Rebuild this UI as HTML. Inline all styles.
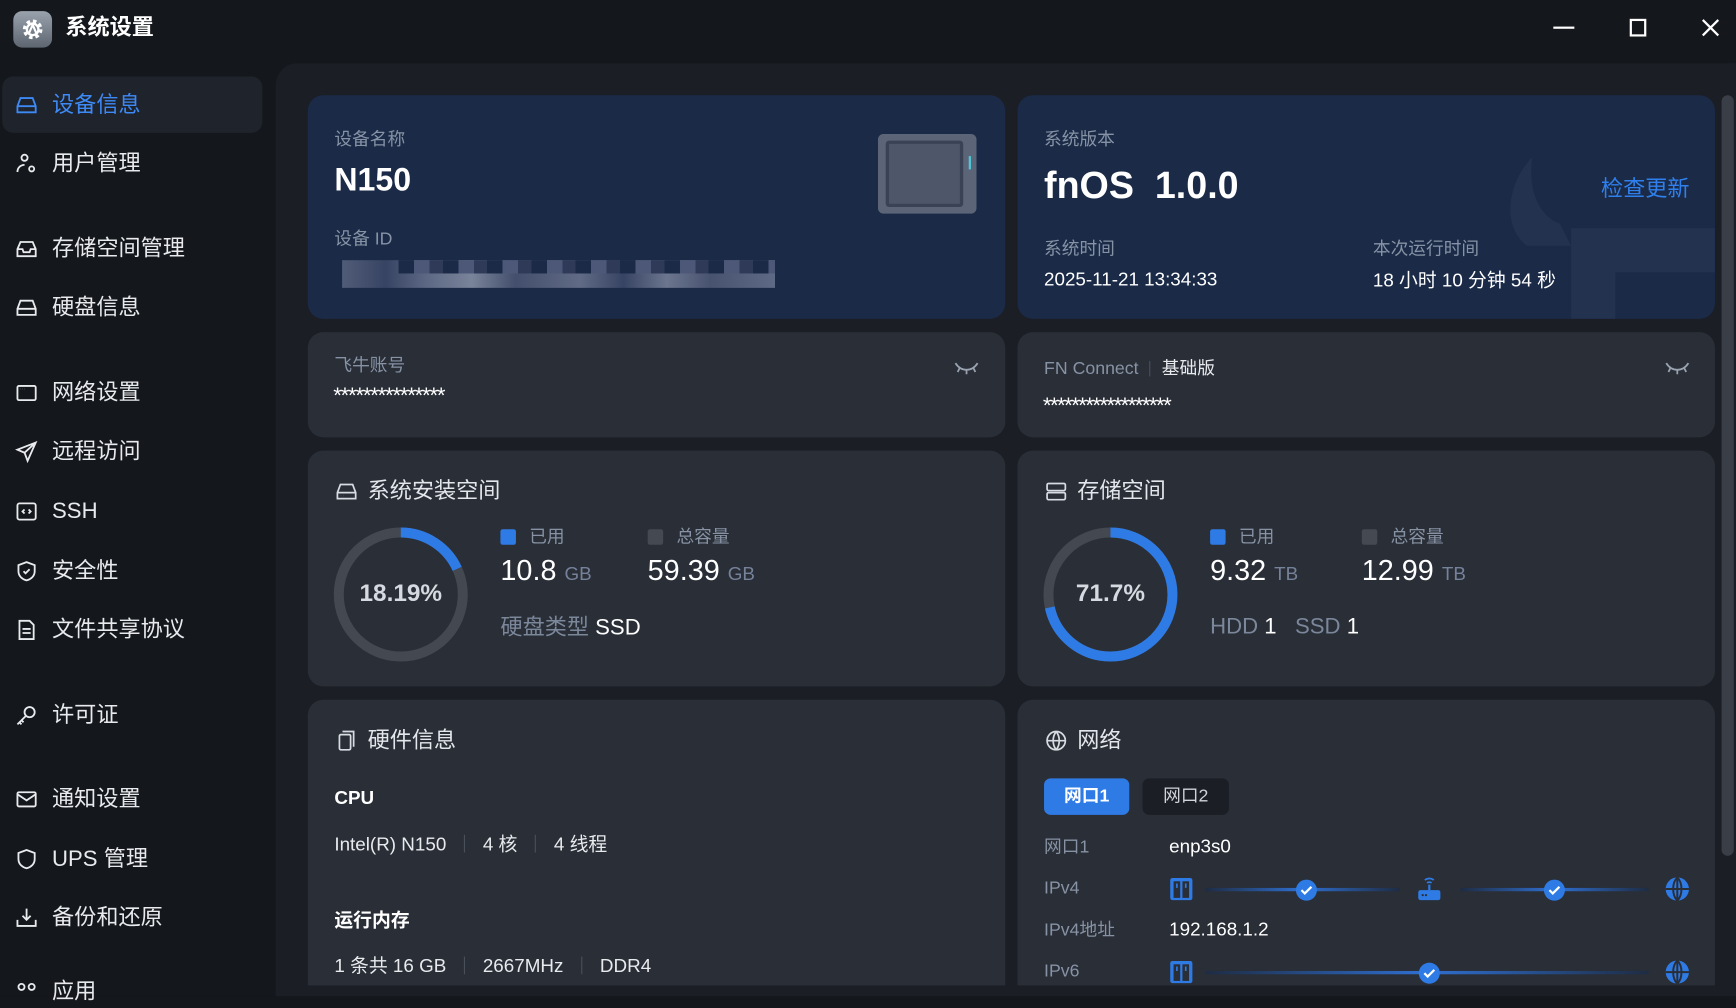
<!DOCTYPE html>
<html><head><meta charset="utf-8"><style>
*{margin:0;padding:0;box-sizing:border-box}
html,body{width:1736px;height:996px;overflow:hidden;background:#14171b}
#w{position:absolute;left:0;top:0;width:1568px;height:900px;transform:scale(1.10714);transform-origin:0 0;background:#14171b;font-family:"Liberation Sans","Noto Sans CJK SC",sans-serif;color:#e8eaed;line-height:1.32}
.a{position:absolute;white-space:nowrap}
.main{position:absolute;left:249px;top:57px;width:1319px;height:843px;background:#1b1e25;border-top-left-radius:20px}
.card{position:absolute;border-radius:14px;background:#292e37;overflow:hidden}
.blue{background:#1a2a47}
.nav{position:absolute;left:13px;font-size:20px;color:#e8eaed;display:flex;align-items:center;gap:12px;height:28px}
.nav svg{width:22px;height:22px}
.lbl{font-size:16px;color:#8793a5}
.sep{display:inline-block;width:1px;height:16px;background:#4a505a;margin:0 16px;vertical-align:-2px}
.ttl{font-size:20px;color:#e3e6ea;display:flex;align-items:center;gap:8px}
</style></head><body><div id="w">
<div class="a" style="left:12px;top:10px;width:35px;height:33px;border-radius:8px;background:linear-gradient(#9aa3ad,#5d6670)"></div>
<svg class="a" style="left:17px;top:14px" width="25" height="25" viewBox="0 0 24 24"><circle cx="12" cy="12" r="7" fill="none" stroke="#fff" stroke-width="3" stroke-dasharray="3 2.5"/><circle cx="12" cy="12" r="5" fill="none" stroke="#fff" stroke-width="2"/><path d="M9 15l3-7 3 7" stroke="#fff" stroke-width="1.8" fill="none"/></svg>
<div class="a" style="left:59px;top:12px;font-size:20px;font-weight:bold;color:#fff">系统设置</div>
<div class="a" style="left:1403px;top:24px;width:19px;height:2px;background:#fff"></div>
<div class="a" style="left:1472px;top:17px;width:15px;height:16px;border:2px solid #fff"></div>
<svg class="a" style="left:1537px;top:17px" width="16" height="16" viewBox="0 0 16 16"><path d="M1 1L15 15M15 1L1 15" stroke="#fff" stroke-width="2"/></svg>

<div class="a" style="left:2px;top:69px;width:235px;height:51px;border-radius:10px;background:#1f232b"></div>
<div class="nav" style="top:81px;color:#3d8af7"><svg viewBox="0 0 24 24" fill="none" stroke="#3d8af7" stroke-width="1.8"><path d="M3 13l3-8h12l3 8v6H3z M3 13h18"/><path d="M6.5 16h.1M9 16h.1"/></svg>设备信息</div>
<div class="nav" style="top:134px"><svg viewBox="0 0 24 24" fill="none" stroke="#e8eaed" stroke-width="1.8"><circle cx="10" cy="6" r="3"/><path d="M3 20c0-4 3-7 7-7"/><circle cx="17" cy="17" r="2.5"/></svg>用户管理</div>
<div class="nav" style="top:211px"><svg viewBox="0 0 24 24" fill="none" stroke="#e8eaed" stroke-width="1.8"><path d="M3 12l3-7h12l3 7v7H3z M3 12h5l1 3h6l1-3h5"/></svg>存储空间管理</div>
<div class="nav" style="top:264px"><svg viewBox="0 0 24 24" fill="none" stroke="#e8eaed" stroke-width="1.8"><path d="M3 13l3-8h12l3 8v6H3z M3 13h18"/></svg>硬盘信息</div>
<div class="nav" style="top:341px"><svg viewBox="0 0 24 24" fill="none" stroke="#e8eaed" stroke-width="1.8"><rect x="3" y="5" width="18" height="14" rx="1.5"/><path d="M6 8h.1M8 8h.1M10 8h.1"/></svg>网络设置</div>
<div class="nav" style="top:394px"><svg viewBox="0 0 24 24" fill="none" stroke="#e8eaed" stroke-width="1.8"><path d="M21 3L3 10l7 3 3 8z M10 13l11-10"/></svg>远程访问</div>
<div class="nav" style="top:448px"><svg viewBox="0 0 24 24" fill="none" stroke="#e8eaed" stroke-width="1.8"><rect x="3" y="4" width="18" height="16" rx="2"/><path d="M10 10l-2 2 2 2M14 10l2 2-2 2"/></svg>SSH</div>
<div class="nav" style="top:502px"><svg viewBox="0 0 24 24" fill="none" stroke="#e8eaed" stroke-width="1.8"><path d="M12 3l8 3v6c0 5-4 8-8 9-4-1-8-4-8-9V6z"/><path d="M9 12l2 2 4-4"/></svg>安全性</div>
<div class="nav" style="top:555px"><svg viewBox="0 0 24 24" fill="none" stroke="#e8eaed" stroke-width="1.8"><path d="M5 3h10l4 4v14H5z M8 11h8M8 15h8"/></svg>文件共享协议</div>
<div class="nav" style="top:632px"><svg viewBox="0 0 24 24" fill="none" stroke="#e8eaed" stroke-width="1.8"><circle cx="15" cy="9" r="5"/><path d="M11 13l-8 8M5 19l2 2M7 17l2 2"/></svg>许可证</div>
<div class="nav" style="top:708px"><svg viewBox="0 0 24 24" fill="none" stroke="#e8eaed" stroke-width="1.8"><rect x="3" y="5" width="18" height="14" rx="1.5"/><path d="M3 7l9 6 9-6"/></svg>通知设置</div>
<div class="nav" style="top:762px"><svg viewBox="0 0 24 24" fill="none" stroke="#e8eaed" stroke-width="1.8"><path d="M12 3l8 3v6c0 5-4 8-8 9-4-1-8-4-8-9V6z"/></svg>UPS 管理</div>
<div class="nav" style="top:815px"><svg viewBox="0 0 24 24" fill="none" stroke="#e8eaed" stroke-width="1.8"><path d="M12 3v11M8 10l4 4 4-4M3 14v6h18v-6"/></svg>备份和还原</div>
<div class="nav" style="top:882px"><svg viewBox="0 0 24 24" fill="none" stroke="#e8eaed" stroke-width="1.8"><circle cx="7" cy="7" r="3"/><circle cx="17" cy="7" r="3"/></svg>应用</div>

<div class="main"></div>
<div class="a" style="left:1555px;top:86px;width:11px;height:687px;border-radius:6px;background:#3a3f47"></div>

<div class="card blue" style="left:278px;top:86px;width:630px;height:202px">
 <div class="a lbl" style="left:24px;top:30px">设备名称</div>
 <div class="a" style="left:24px;top:58px;font-size:29px;font-weight:bold;color:#fff">N150</div>
 <div class="a lbl" style="left:24px;top:120px">设备 ID</div>
 <div class="a" style="left:31px;top:149px;width:391px;height:25px;background:linear-gradient(90deg,#5a6580,#3c4868 10%,#6a7590 20%,#8a93a8 30%,#4a5573 40%,#6d7690 55%,#3c4868 65%,#7a839a 75%,#505a77 85%,#6a7590);opacity:.85"></div>
 <div class="a" style="left:82px;top:149px;width:340px;height:12px;background:repeating-linear-gradient(90deg,#1a2a47 0 14px,#4d5878 14px 28px,#2e3a58 28px 40px)"></div>
 <div class="a" style="left:515px;top:35px;width:89px;height:72px;border-radius:5px;background:#5b6577"></div>
 <div class="a" style="left:522px;top:41px;width:70px;height:60px;border:3px solid #3a4255;background:#4e5769;border-radius:3px"></div>
 <div class="a" style="left:597px;top:55px;width:2px;height:12px;background:#4ec8d8"></div>
</div>
<div class="card blue" style="left:919px;top:86px;width:630px;height:202px">
 <svg class="a" style="left:440px;top:50px" width="190" height="152" viewBox="0 0 190 152" fill="#22324f"><path d="M25 6c-20 20-30 60-5 80l40 0-10-20c-15-5-30-25-25-60z"/><path d="M60 70h130v40H100v42H60z"/></svg>
 <div class="a lbl" style="left:24px;top:30px">系统版本</div>
 <div class="a" style="left:24px;top:60px;font-size:34px;font-weight:bold;color:#fff">fnOS&nbsp; 1.0.0</div>
 <div class="a" style="left:527px;top:72px;font-size:20px;color:#2f80ed">检查更新</div>
 <div class="a lbl" style="left:24px;top:129px">系统时间</div>
 <div class="a" style="left:24px;top:156px;font-size:17px;color:#fff">2025-11-21 13:34:33</div>
 <div class="a lbl" style="left:321px;top:129px">本次运行时间</div>
 <div class="a" style="left:321px;top:157px;font-size:17px;color:#fff">18 小时 10 分钟 54 秒</div>
</div>
<div class="card" style="left:278px;top:300px;width:630px;height:95px">
 <div class="a lbl" style="left:24px;top:20px">飞牛账号</div>
 <div class="a" style="left:23px;top:45px;font-size:20px;color:#fff;letter-spacing:-1.1px">***************</div>
 <svg class="a" style="left:584px;top:26px" width="22" height="14" viewBox="0 0 22 14" fill="none" stroke="#9aa3b0" stroke-width="1.6"><path d="M1 2c5 8 15 8 20 0M5 6l-2 4M11 8v4M17 6l2 4"/></svg>
</div>
<div class="card" style="left:919px;top:300px;width:630px;height:95px">
 <div class="a lbl" style="left:24px;top:23px">FN Connect<span class="sep" style="margin:0 10px;height:14px"></span><span style="color:#e8eaed">基础版</span></div>
 <div class="a" style="left:23px;top:54px;font-size:20px;color:#fff;letter-spacing:-1.4px">******************</div>
 <svg class="a" style="left:585px;top:26px" width="22" height="14" viewBox="0 0 22 14" fill="none" stroke="#9aa3b0" stroke-width="1.6"><path d="M1 2c5 8 15 8 20 0M5 6l-2 4M11 8v4M17 6l2 4"/></svg>
</div>
<div class="card" style="left:278px;top:407px;width:630px;height:213px">
 <div class="a ttl" style="left:24px;top:24px"><svg width="22" height="22" viewBox="0 0 24 24" fill="none" stroke="#d8dce2" stroke-width="1.7"><path d="M3 13l3-8h12l3 8v6H3z M3 13h18M6.5 16h.1M9 16h.1"/></svg>系统安装空间</div>
 <svg class="a" style="left:23px;top:69px" width="122" height="122" viewBox="0 0 122 122"><circle cx="61" cy="61" r="56" fill="none" stroke="#434851" stroke-width="9"/><circle cx="61" cy="61" r="56" fill="none" stroke="#2f7be5" stroke-width="9" stroke-dasharray="64 400" transform="rotate(-90 61 61)"/></svg>
 <div class="a" style="left:23px;top:114px;width:122px;text-align:center;font-size:22px;font-weight:bold;color:#d6dae0">18.19%</div>
 <div class="a" style="left:174px;top:71px;width:14px;height:14px;border-radius:2px;background:#2f7be5"></div>
 <div class="a lbl" style="left:200px;top:68px">已用</div>
 <div class="a" style="left:307px;top:71px;width:14px;height:14px;border-radius:2px;background:#444952"></div>
 <div class="a lbl" style="left:333px;top:68px">总容量</div>
 <div class="a" style="left:174px;top:91px;font-size:26px;color:#fff">10.8 <span style="font-size:17px;color:#76829a">GB</span></div>
 <div class="a" style="left:307px;top:91px;font-size:26px;color:#fff">59.39 <span style="font-size:17px;color:#76829a">GB</span></div>
 <div class="a" style="left:174px;top:147px;font-size:20px;color:#7b879a">硬盘类型 <span style="color:#fff">SSD</span></div>
</div>
<div class="card" style="left:919px;top:407px;width:630px;height:213px">
 <div class="a ttl" style="left:24px;top:24px"><svg width="22" height="22" viewBox="0 0 24 24" fill="none" stroke="#d8dce2" stroke-width="1.7"><rect x="3" y="4" width="18" height="7" rx="1.5"/><rect x="3" y="13" width="18" height="7" rx="1.5"/></svg>存储空间</div>
 <svg class="a" style="left:23px;top:69px" width="122" height="122" viewBox="0 0 122 122"><circle cx="61" cy="61" r="56" fill="none" stroke="#434851" stroke-width="9"/><circle cx="61" cy="61" r="56" fill="none" stroke="#2f7be5" stroke-width="9" stroke-dasharray="252 400" transform="rotate(-90 61 61)"/></svg>
 <div class="a" style="left:23px;top:114px;width:122px;text-align:center;font-size:22px;font-weight:bold;color:#d6dae0">71.7%</div>
 <div class="a" style="left:174px;top:71px;width:14px;height:14px;border-radius:2px;background:#2f7be5"></div>
 <div class="a lbl" style="left:200px;top:68px">已用</div>
 <div class="a" style="left:311px;top:71px;width:14px;height:14px;border-radius:2px;background:#444952"></div>
 <div class="a lbl" style="left:337px;top:68px">总容量</div>
 <div class="a" style="left:174px;top:91px;font-size:26px;color:#fff">9.32 <span style="font-size:17px;color:#76829a">TB</span></div>
 <div class="a" style="left:311px;top:91px;font-size:26px;color:#fff">12.99 <span style="font-size:17px;color:#76829a">TB</span></div>
 <div class="a" style="left:174px;top:146px;font-size:20px;color:#7b879a">HDD <span style="color:#fff">1</span>&nbsp;&nbsp; SSD <span style="color:#fff">1</span></div>
</div>
<div class="card" style="left:278px;top:632px;width:630px;height:258px;border-bottom-left-radius:0;border-bottom-right-radius:0">
 <div class="a ttl" style="left:24px;top:24px"><svg width="22" height="22" viewBox="0 0 24 24" fill="none" stroke="#d8dce2" stroke-width="1.7"><rect x="5" y="6" width="11" height="15" rx="1.5"/><path d="M8 3h11v15"/></svg>硬件信息</div>
 <div class="a" style="left:24px;top:78px;font-size:17px;font-weight:bold;color:#fff">CPU</div>
 <div class="a" style="left:24px;top:120px;font-size:17px;color:#e8eaed">Intel(R) N150<span class="sep"></span>4 核<span class="sep"></span>4 线程</div>
 <div class="a" style="left:24px;top:189px;font-size:17px;font-weight:bold;color:#fff">运行内存</div>
 <div class="a" style="left:24px;top:230px;font-size:17px;color:#e8eaed">1 条共 16 GB<span class="sep"></span>2667MHz<span class="sep"></span>DDR4</div>
</div>
<div class="card" style="left:919px;top:632px;width:630px;height:258px;border-bottom-left-radius:0;border-bottom-right-radius:0">
 <div class="a ttl" style="left:24px;top:24px"><svg width="22" height="22" viewBox="0 0 24 24" fill="none" stroke="#d8dce2" stroke-width="1.7"><circle cx="12" cy="12" r="9"/><path d="M3 12h18M12 3c-4 5-4 13 0 18M12 3c4 5 4 13 0 18"/></svg>网络</div>
 <div class="a" style="left:24px;top:71px;width:77px;height:33px;border-radius:6px;background:#2f7be5;color:#fff;font-size:16px;font-weight:bold;text-align:center;line-height:33px">网口1</div>
 <div class="a" style="left:113px;top:71px;width:78px;height:33px;border-radius:6px;background:#1b1e25;color:#d0d4da;font-size:16px;text-align:center;line-height:33px">网口2</div>
 <div class="a lbl" style="left:24px;top:123px">网口1</div>
 <div class="a" style="left:137px;top:122px;font-size:17px;color:#fff">enp3s0</div>
 <div class="a lbl" style="left:24px;top:160px">IPv4</div>
 <div class="a lbl" style="left:24px;top:198px">IPv4地址</div>
 <div class="a" style="left:137px;top:197px;font-size:17px;color:#fff">192.168.1.2</div>
 <div class="a lbl" style="left:24px;top:235px">IPv6</div>
 <div class="a" style="left:170px;top:170px;width:175px;height:3px;background:linear-gradient(90deg,#1e2c44,#2f6fd0 50%,#1e2c44)"></div>
 <div class="a" style="left:400px;top:170px;width:170px;height:3px;background:linear-gradient(90deg,#1e2c44,#2f6fd0 50%,#1e2c44)"></div>
 <div class="a" style="left:170px;top:245px;width:400px;height:3px;background:linear-gradient(90deg,#1e2c44,#2f6fd0 50%,#1e2c44)"></div>
 <svg class="a" style="left:137px;top:160px" width="22" height="22" viewBox="0 0 22 22"><rect x="1" y="1" width="20" height="20" rx="2" fill="#2f7be5"/><rect x="4" y="4" width="6" height="15" fill="#292e37"/><rect x="12" y="4" width="6" height="15" fill="#292e37"/><path d="M7 6v4M15 6v4" stroke="#2f7be5" stroke-width="1.5"/></svg>
 <svg class="a" style="left:137px;top:235px" width="22" height="22" viewBox="0 0 22 22"><rect x="1" y="1" width="20" height="20" rx="2" fill="#2f7be5"/><rect x="4" y="4" width="6" height="15" fill="#292e37"/><rect x="12" y="4" width="6" height="15" fill="#292e37"/><path d="M7 6v4M15 6v4" stroke="#2f7be5" stroke-width="1.5"/></svg>
 <svg class="a" style="left:251px;top:162px" width="20" height="20" viewBox="0 0 20 20"><circle cx="10" cy="10" r="9.5" fill="#2f7be5"/><path d="M5.5 10l3 3 6-6" stroke="#fff" stroke-width="2" fill="none"/></svg>
 <svg class="a" style="left:475px;top:162px" width="20" height="20" viewBox="0 0 20 20"><circle cx="10" cy="10" r="9.5" fill="#2f7be5"/><path d="M5.5 10l3 3 6-6" stroke="#fff" stroke-width="2" fill="none"/></svg>
 <svg class="a" style="left:362px;top:237px" width="20" height="20" viewBox="0 0 20 20"><circle cx="10" cy="10" r="9.5" fill="#2f7be5"/><path d="M5.5 10l3 3 6-6" stroke="#fff" stroke-width="2" fill="none"/></svg>
 <svg class="a" style="left:361px;top:158px" width="22" height="24" viewBox="0 0 22 24"><path d="M7 5c2-2 6-2 8 0M9 7.5c1-1 3-1 4 0" stroke="#2f7be5" stroke-width="1.6" fill="none"/><path d="M11 9v5" stroke="#2f7be5" stroke-width="2"/><rect x="1" y="14" width="20" height="9" rx="2" fill="#2f7be5"/><circle cx="5" cy="18.5" r="1" fill="#292e37"/><circle cx="8" cy="18.5" r="1" fill="#292e37"/></svg>
 <svg class="a" style="left:585px;top:160px" width="22" height="22" viewBox="0 0 22 22"><circle cx="11" cy="11" r="10.5" fill="#2f7be5"/><path d="M0.5 11h21M11 .5v21M11 .5c-5 5-5 16 0 21M11 .5c5 5 5 16 0 21" stroke="#292e37" stroke-width="1.8" fill="none"/></svg>
 <svg class="a" style="left:585px;top:235px" width="22" height="22" viewBox="0 0 22 22"><circle cx="11" cy="11" r="10.5" fill="#2f7be5"/><path d="M0.5 11h21M11 .5v21M11 .5c-5 5-5 16 0 21M11 .5c5 5 5 16 0 21" stroke="#292e37" stroke-width="1.8" fill="none"/></svg>
</div>
</div></body></html>
